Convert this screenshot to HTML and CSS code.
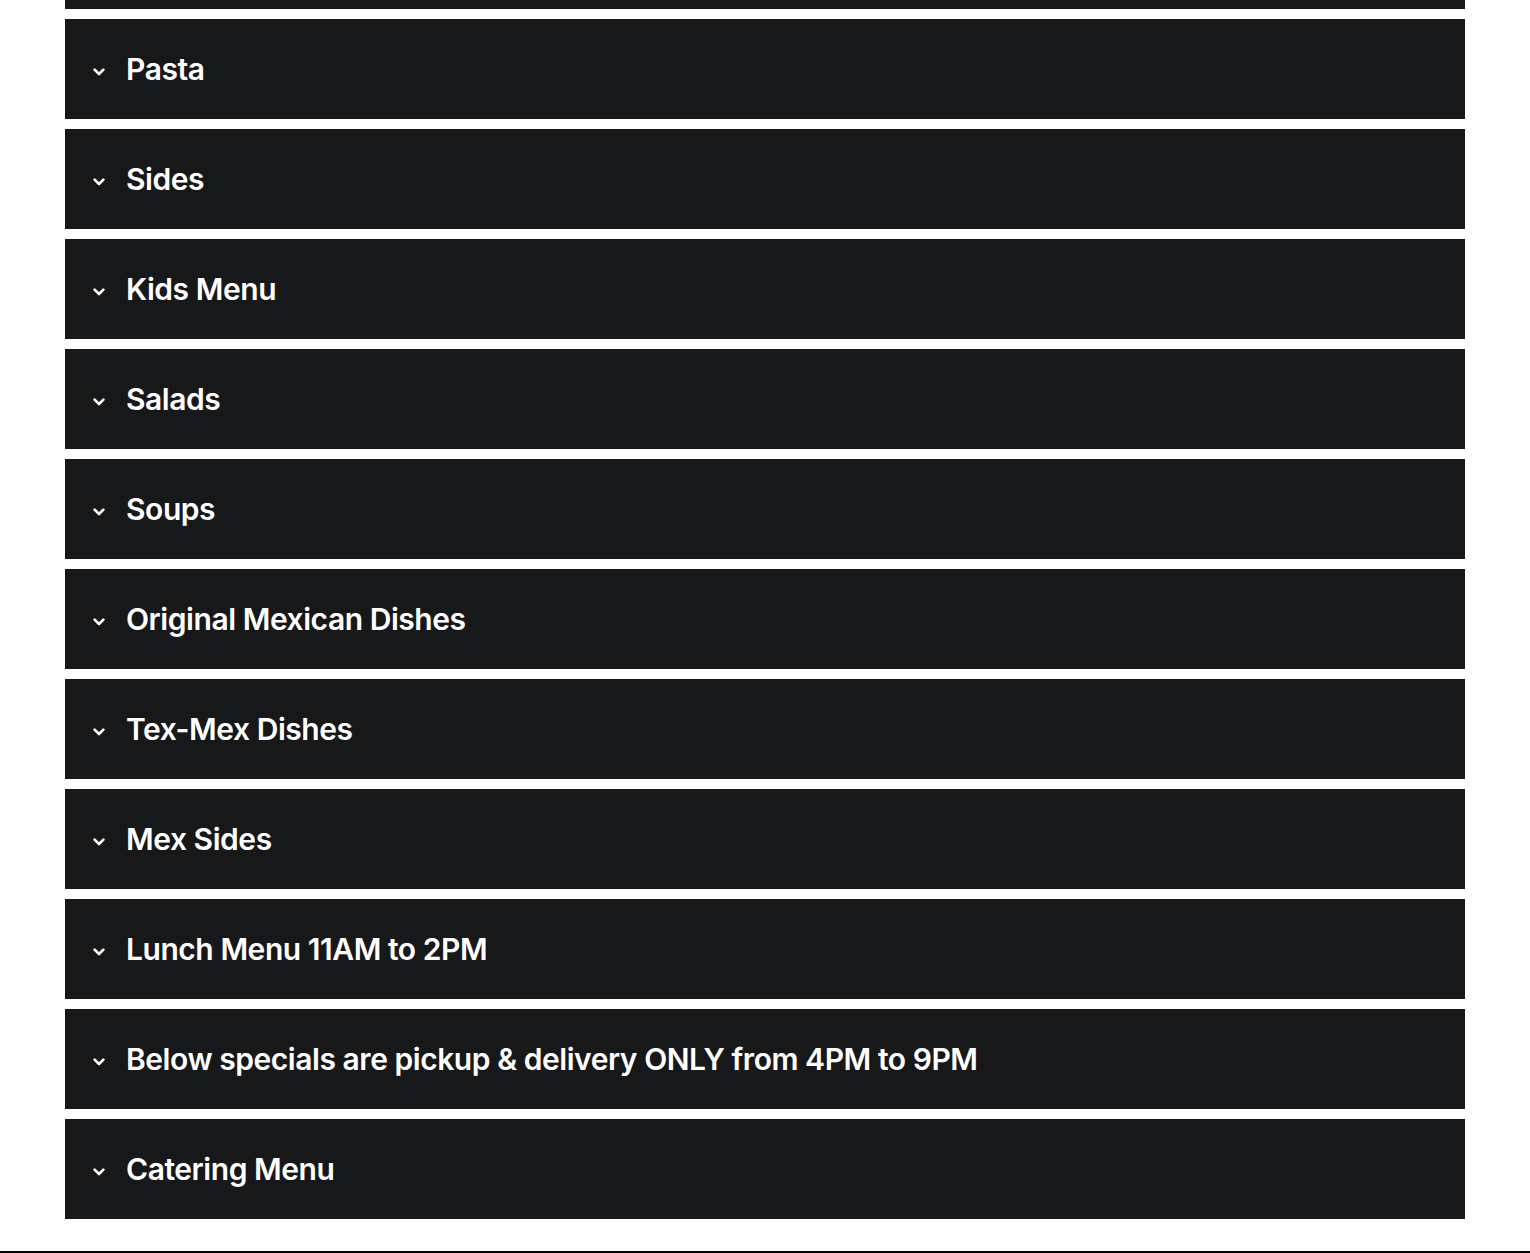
FILE: index.html
```html
<!DOCTYPE html>
<html>
<head>
<meta charset="utf-8">
<link rel="stylesheet" href="styles.css">
</head>
<body>
<main class="menu">
  <div class="panel panel-clipped"></div>
  <div class="panel"><span class="chev"><svg viewBox="0 0 12 8" width="12" height="8"><path d="M1.6 1.6 L6 6 L10.4 1.6" fill="none" stroke="#fff" stroke-width="2.6" stroke-linecap="round" stroke-linejoin="round"/></svg></span><h2 class="title">Pasta</h2></div>
  <div class="panel"><span class="chev"><svg viewBox="0 0 12 8" width="12" height="8"><path d="M1.6 1.6 L6 6 L10.4 1.6" fill="none" stroke="#fff" stroke-width="2.6" stroke-linecap="round" stroke-linejoin="round"/></svg></span><h2 class="title">Sides</h2></div>
  <div class="panel"><span class="chev"><svg viewBox="0 0 12 8" width="12" height="8"><path d="M1.6 1.6 L6 6 L10.4 1.6" fill="none" stroke="#fff" stroke-width="2.6" stroke-linecap="round" stroke-linejoin="round"/></svg></span><h2 class="title">Kids Menu</h2></div>
  <div class="panel"><span class="chev"><svg viewBox="0 0 12 8" width="12" height="8"><path d="M1.6 1.6 L6 6 L10.4 1.6" fill="none" stroke="#fff" stroke-width="2.6" stroke-linecap="round" stroke-linejoin="round"/></svg></span><h2 class="title">Salads</h2></div>
  <div class="panel"><span class="chev"><svg viewBox="0 0 12 8" width="12" height="8"><path d="M1.6 1.6 L6 6 L10.4 1.6" fill="none" stroke="#fff" stroke-width="2.6" stroke-linecap="round" stroke-linejoin="round"/></svg></span><h2 class="title">Soups</h2></div>
  <div class="panel"><span class="chev"><svg viewBox="0 0 12 8" width="12" height="8"><path d="M1.6 1.6 L6 6 L10.4 1.6" fill="none" stroke="#fff" stroke-width="2.6" stroke-linecap="round" stroke-linejoin="round"/></svg></span><h2 class="title">Original Mexican Dishes</h2></div>
  <div class="panel"><span class="chev"><svg viewBox="0 0 12 8" width="12" height="8"><path d="M1.6 1.6 L6 6 L10.4 1.6" fill="none" stroke="#fff" stroke-width="2.6" stroke-linecap="round" stroke-linejoin="round"/></svg></span><h2 class="title">Tex-Mex Dishes</h2></div>
  <div class="panel"><span class="chev"><svg viewBox="0 0 12 8" width="12" height="8"><path d="M1.6 1.6 L6 6 L10.4 1.6" fill="none" stroke="#fff" stroke-width="2.6" stroke-linecap="round" stroke-linejoin="round"/></svg></span><h2 class="title">Mex Sides</h2></div>
  <div class="panel"><span class="chev"><svg viewBox="0 0 12 8" width="12" height="8"><path d="M1.6 1.6 L6 6 L10.4 1.6" fill="none" stroke="#fff" stroke-width="2.6" stroke-linecap="round" stroke-linejoin="round"/></svg></span><h2 class="title">Lunch Menu 11AM to 2PM</h2></div>
  <div class="panel"><span class="chev"><svg viewBox="0 0 12 8" width="12" height="8"><path d="M1.6 1.6 L6 6 L10.4 1.6" fill="none" stroke="#fff" stroke-width="2.6" stroke-linecap="round" stroke-linejoin="round"/></svg></span><h2 class="title">Below specials are pickup &amp; delivery ONLY from 4PM to 9PM</h2></div>
  <div class="panel"><span class="chev"><svg viewBox="0 0 12 8" width="12" height="8"><path d="M1.6 1.6 L6 6 L10.4 1.6" fill="none" stroke="#fff" stroke-width="2.6" stroke-linecap="round" stroke-linejoin="round"/></svg></span><h2 class="title">Catering Menu</h2></div>
</main>
<footer class="footer"></footer>
</body>
</html>
```
FILE: styles.css
```css
html, body {
  margin: 0;
  padding: 0;
  background: #ffffff;
  overflow: hidden;
}
body {
  font-family: Inter, "Noto Sans", sans-serif;
}
.menu {
  padding: 0 65px;
  display: flex;
  flex-direction: column;
  gap: 10px;
}
.panel {
  height: 100px;
  background: #17181a;
  display: flex;
  align-items: center;
  padding-left: 28px;
  box-sizing: border-box;
}
.panel-clipped {
  height: 9px;
}
.chev {
  width: 12px;
  height: 8px;
  display: flex;
  margin-top: 5px;
}
.title {
  margin: 0 0 0 21px;
  color: #ffffff;
  font-size: 30px;
  font-weight: 600;
  line-height: 1;
  letter-spacing: -0.45px;
}
.footer {
  margin-top: 32px;
  border-top: 2px solid #000000;
  height: 10px;
}
```
